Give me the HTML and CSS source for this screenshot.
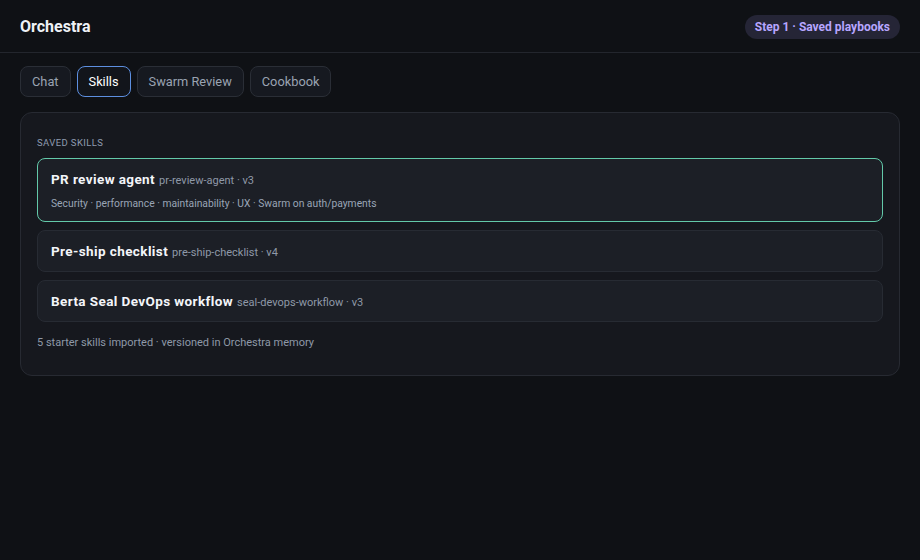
FILE: index.html
```html
<!DOCTYPE html>
<html>
<head>
<meta charset="utf-8">
<link rel="stylesheet" href="styles.css">
</head>
<body>
<header class="topbar">
  <div class="brand">Orchestra</div>
  <div class="badge">Step 1 · Saved playbooks</div>
</header>
<nav class="tabs">
  <button class="tab">Chat</button>
  <button class="tab active">Skills</button>
  <button class="tab">Swarm Review</button>
  <button class="tab">Cookbook</button>
</nav>
<main class="panel">
  <div class="label">SAVED SKILLS</div>
  <div class="list">
    <div class="card selected">
      <div class="title-row"><span class="title">PR review agent</span> <span class="meta">pr-review-agent · v3</span></div>
      <div class="desc">Security · performance · maintainability · UX · Swarm on auth/payments</div>
    </div>
    <div class="card">
      <div class="title-row"><span class="title">Pre-ship checklist</span> <span class="meta">pre-ship-checklist · v4</span></div>
    </div>
    <div class="card">
      <div class="title-row"><span class="title">Berta Seal DevOps workflow</span> <span class="meta">seal-devops-workflow · v3</span></div>
    </div>
  </div>
  <div class="foot">5 starter skills imported · versioned in Orchestra memory</div>
</main>
</body>
</html>
```
FILE: styles.css
```css
* { box-sizing: border-box; }
html, body { margin: 0; padding: 0; }
body {
  background: #0f1115;
  color: #e6e9ef;
  font-family: Roboto, "Open Sans", sans-serif;
  width: 920px;
  height: 560px;
  overflow: hidden;
}
.topbar {
  height: 53px;
  display: flex;
  align-items: center;
  justify-content: space-between;
  padding: 0 20px;
  border-bottom: 1px solid #23262d;
}
.brand {
  font-size: 16px;
  font-weight: 700;
  color: #eef1f6;
  margin-top: 1px;
}
.badge {
  height: 24px;
  padding: 0 10px;
  border-radius: 12px;
  background: #252536;
  color: #b7a6ff;
  font-size: 12px;
  font-weight: 700;
  display: flex;
  align-items: center;
  margin-top: 1px;
}
.tabs {
  display: flex;
  gap: 6px;
  padding: 13px 20px 0;
}
.tab {
  height: 31px;
  padding: 0 11px;
  border-radius: 8px;
  border: 1px solid #2a2e36;
  background: #161920;
  color: #9aa3b2;
  font-family: inherit;
  font-size: 12.8px;
}
.tab.active {
  border-color: #5d8fe0;
  color: #ffffff;
  background: #12151b;
}
.panel {
  margin: 15px 20px 0;
  height: 264px;
  border: 1px solid #272a32;
  border-radius: 12px;
  background: #16181e;
  padding: 24px 16px 0;
}
.label {
  font-size: 9.5px;
  letter-spacing: 0.4px;
  color: #8e9bb0;
  line-height: 12px;
}
.list {
  display: flex;
  flex-direction: column;
  gap: 8px;
  margin-top: 9px;
}
.card {
  border: 1px solid #272b33;
  border-radius: 8px;
  background: #1c1f26;
  padding: 12px 13px 12px;
}
.card.selected {
  border-color: #63c9a9;
  padding: 12px 13px 10px;
}
.title-row {
  height: 16px;
  line-height: 16px;
  white-space: nowrap;
}
.title {
  font-size: 13.5px;
  font-weight: 700;
  letter-spacing: 0.4px;
  color: #f3f5f9;
}
.meta {
  font-size: 11px;
  color: #8f99a8;
}
.desc {
  margin-top: 10px;
  font-size: 10.3px;
  color: #9aa5b6;
  line-height: 14px;
}
.foot {
  margin-top: 14px;
  font-size: 11px;
  color: #8f99a8;
}
```
